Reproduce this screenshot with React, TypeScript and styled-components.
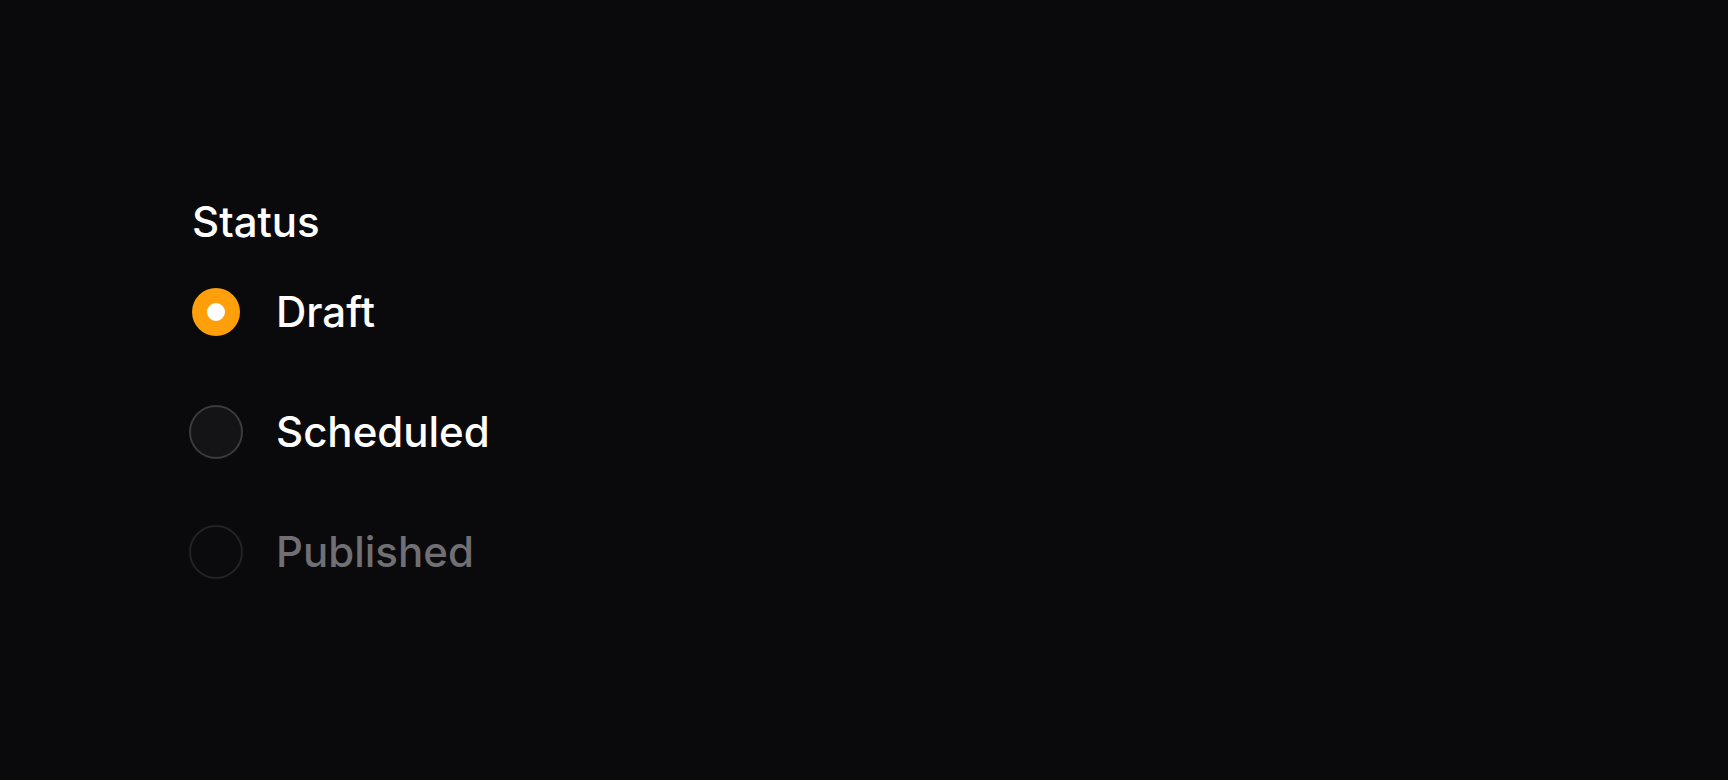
import React, { useState } from "react";
import styled, { createGlobalStyle } from "styled-components";

type Option = {
  value: string;
  label: string;
  disabled?: boolean;
};

const options: Option[] = [
  { value: "draft", label: "Draft" },
  { value: "scheduled", label: "Scheduled" },
  { value: "published", label: "Published", disabled: true }
];

const GlobalStyle = createGlobalStyle`
  html, body {
    margin: 0;
    padding: 0;
    background: #0a0a0c;
  }
  body {
    font-family: Inter, "Noto Sans", "Liberation Sans", sans-serif;
    -webkit-font-smoothing: antialiased;
  }
`;

const Page = styled.div`
  min-height: 780px;
  padding: 197px 0 0 192px;
  box-sizing: border-box;
`;

const Fieldset = styled.fieldset`
  border: 0;
  margin: 0;
  padding: 0;
  display: flex;
  flex-direction: column;
`;

const Legend = styled.legend`
  padding: 0;
  margin: 0;
  font-size: 42px;
  line-height: 50px;
  font-weight: 500;
  color: #ffffff;
`;

const List = styled.div`
  display: flex;
  flex-direction: column;
  gap: 72px;
  margin-top: 41px;
`;

const Row = styled.label<{ disabled?: boolean }>`
  display: flex;
  align-items: center;
  gap: 36px;
  height: 48px;
  cursor: ${({ disabled }) => (disabled ? "not-allowed" : "pointer")};
`;

const HiddenInput = styled.input`
  position: absolute;
  opacity: 0;
  width: 0;
  height: 0;
  margin: 0;
`;

const Slot = styled.span`
  width: 48px;
  height: 48px;
  display: flex;
  align-items: center;
  justify-content: center;
  flex-shrink: 0;
`;

const Circle = styled.span<{ checked: boolean; disabled?: boolean }>`
  box-sizing: border-box;
  border-radius: 50%;
  display: flex;
  align-items: center;
  justify-content: center;
  flex-shrink: 0;
  width: ${({ checked }) => (checked ? "48px" : "54px")};
  height: ${({ checked }) => (checked ? "48px" : "54px")};
  background: ${({ checked, disabled }) =>
    checked ? "#ff9f0a" : disabled ? "#0b0b0d" : "#141416"};
  border: ${({ checked, disabled }) =>
    checked ? "none" : `2.5px solid ${disabled ? "#232326" : "#3b3b3e"}`};
`;

const Dot = styled.span`
  width: 18px;
  height: 18px;
  border-radius: 50%;
  background: #ffffff;
`;

const Label = styled.span<{ disabled?: boolean }>`
  font-size: 42px;
  line-height: 50px;
  font-weight: 500;
  color: ${({ disabled }) => (disabled ? "#6f6f74" : "#ffffff")};
`;

export default function App() {
  const [status, setStatus] = useState("draft");

  return (
    <>
      <GlobalStyle />
      <Page>
        <Fieldset>
          <Legend>Status</Legend>
          <List>
            {options.map(opt => {
              const checked = status === opt.value;
              return (
                <Row key={opt.value} disabled={opt.disabled}>
                  <HiddenInput
                    type="radio"
                    name="status"
                    value={opt.value}
                    checked={checked}
                    disabled={opt.disabled}
                    onChange={() => setStatus(opt.value)}
                  />
                  <Slot>
                    <Circle checked={checked} disabled={opt.disabled}>
                      {checked && <Dot />}
                    </Circle>
                  </Slot>
                  <Label disabled={opt.disabled}>{opt.label}</Label>
                </Row>
              );
            })}
          </List>
        </Fieldset>
      </Page>
    </>
  );
}
